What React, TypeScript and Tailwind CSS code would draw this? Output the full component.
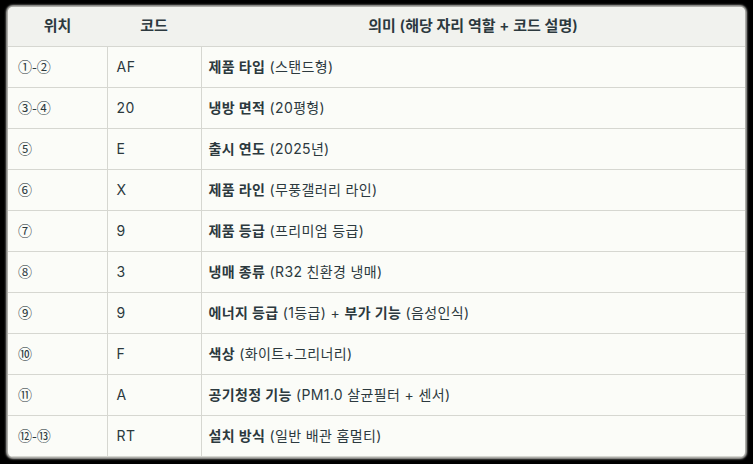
import type { ReactNode } from 'react';

type Row = { pos: string; code: string; meaning: ReactNode };

const B = ({ children }: { children: ReactNode }) => <span className="font-semibold">{children}</span>;

const ROWS: Row[] = [
  { pos: '①-②', code: 'AF', meaning: <><B>제품 타입</B> (스탠드형)</> },
  { pos: '③-④', code: '20', meaning: <><B>냉방 면적</B> (20평형)</> },
  { pos: '⑤', code: 'E', meaning: <><B>출시 연도</B> (2025년)</> },
  { pos: '⑥', code: 'X', meaning: <><B>제품 라인</B> (무풍갤러리 라인)</> },
  { pos: '⑦', code: '9', meaning: <><B>제품 등급</B> (프리미엄 등급)</> },
  { pos: '⑧', code: '3', meaning: <><B>냉매 종류</B> (R32 친환경 냉매)</> },
  { pos: '⑨', code: '9', meaning: <><B>에너지 등급</B> (1등급) + <B>부가 기능</B> (음성인식)</> },
  { pos: '⑩', code: 'F', meaning: <><B>색상</B> (화이트+그리너리)</> },
  { pos: '⑪', code: 'A', meaning: <><B>공기청정 기능</B> (PM1.0 살균필터 + 센서)</> },
  { pos: '⑫-⑬', code: 'RT', meaning: <><B>설치 방식</B> (일반 배관 홈멀티)</> },
];

export default function App() {
  return (
    <div className="w-[753px] h-[464px] bg-black pt-[7px] pl-[8px] overflow-hidden">
      <div
        className="w-[737px] rounded-[5px] overflow-hidden bg-[#fbfcf8] shadow-[0_0_2px_2px_#b8b8b4] text-[14px] text-[#2c393e]"
        style={{ fontFamily: 'Inter, "Noto Sans CJK KR", sans-serif' }}
      >
        <table className="w-full table-fixed border-collapse">
          <colgroup>
            <col className="w-[99px]" />
            <col className="w-[94px]" />
            <col />
          </colgroup>
          <thead>
            <tr className="h-[39px] bg-[#f1f2ee] border-b border-[#d6d7d1] text-[15px]">
              <th className="font-semibold text-center">위치</th>
              <th className="font-semibold text-center">코드</th>
              <th className="font-semibold text-center">의미 (해당 자리 역할 + 코드 설명)</th>
            </tr>
          </thead>
          <tbody>
            {ROWS.map((r, i) => (
              <tr key={i} className="h-[41px] border-b border-[#d6d7d1]">
                <td
                  className="pl-[10px] border-r border-[#d6d7d1]"
                  style={{ fontFamily: '"Noto Sans CJK KR", sans-serif' }}
                >
                  {r.pos}
                </td>
                <td className="pl-[9px] border-r border-[#d6d7d1] tracking-[0.5px]">{r.code}</td>
                <td className="pl-[7px] tracking-[0.35px]">{r.meaning}</td>
              </tr>
            ))}
          </tbody>
        </table>
      </div>
    </div>
  );
}
